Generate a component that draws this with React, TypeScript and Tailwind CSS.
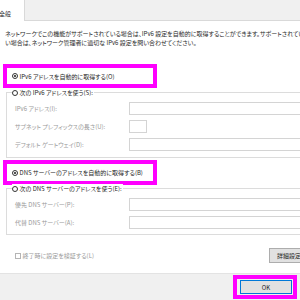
const font = { fontFamily: '"Noto Sans CJK JP", "Noto Sans", sans-serif' };

function Radio({ checked }: { checked?: boolean }) {
  return (
    <span className="w-[6px] h-[6px] rounded-full border border-[#333333] bg-white flex items-center justify-center shrink-0">
      {checked && <span className="w-[2px] h-[2px] rounded-full bg-[#1a1a1a]" />}
    </span>
  );
}

function Field({ label, width }: { label: string; width: string }) {
  return (
    <div className="flex items-center h-[13px]">
      <span className="w-[114px] shrink-0 text-[#9a9a9a] whitespace-nowrap">{label}</span>
      <div className={`${width} h-[13px] shrink-0 border border-[#d4d4d4] bg-white`} />
    </div>
  );
}

export default function App() {
  return (
    <div
      className="w-[300px] h-[300px] overflow-hidden bg-white flex flex-col text-[6px] leading-[9px] text-[#1f1f1f] [font-feature-settings:'palt']"
      style={font}
    >
      {/* タブ */}
      <div className="h-[21px] flex shrink-0 bg-[#f0f0f0]">
        <div className="w-[25px] bg-white border-r border-[#d9d9d9] flex items-center pt-[6px]">
          <span className="-ml-[1px]">全般</span>
        </div>
        <div className="flex-1 border-b border-[#d9d9d9]" />
      </div>

      {/* 説明 */}
      <div className="mt-[8px] pl-[5px] whitespace-nowrap text-[#2a2a2a]">
        <p>ネットワークでこの機能がサポートされている場合は、IPv6 設定を自動的に取得することができます。サポートされていな</p>
        <p>い場合は、ネットワーク管理者に適切な IPv6 設定を問い合わせてください。</p>
      </div>

      {/* IPv6 自動 */}
      <div className="mt-[17px] ml-[3px] w-[154px] h-[24px] shrink-0 border-4 border-[#ff00ff] flex items-center pl-[5px] gap-[1.5px]">
        <Radio checked />
        <span className="whitespace-nowrap">IPv6 アドレスを自動的に取得する(O)</span>
      </div>

      {/* IPv6 手動 */}
      <div className="relative mt-[4px] ml-[6px] w-[320px] h-[66px] shrink-0 border-l border-t border-b border-[#dcdcdc] pt-[9px] pl-[8px] flex flex-col gap-[5px]">
        <div className="absolute -top-[5px] left-[5px] bg-white flex items-center gap-[1.5px] pr-[1px]">
          <Radio />
          <span className="whitespace-nowrap">次の IPv6 アドレスを使う(S):</span>
        </div>
        <Field label="IPv6 アドレス(I):" width="w-[200px]" />
        <Field label="サブネット プレフィックスの長さ(U):" width="w-[18px]" />
        <Field label="デフォルト ゲートウェイ(D):" width="w-[200px]" />
      </div>

      {/* DNS 自動 */}
      <div className="mt-[2px] ml-[3px] w-[154px] h-[25px] shrink-0 border-4 border-[#ff00ff] flex items-center pl-[5px] gap-[1.5px]">
        <Radio checked />
        <span className="whitespace-nowrap">DNS サーバーのアドレスを自動的に取得する(B)</span>
      </div>

      {/* DNS 手動 */}
      <div className="relative mt-[3px] ml-[6px] w-[320px] h-[47px] shrink-0 border-l border-t border-b border-[#dcdcdc] pt-[9px] pl-[8px] flex flex-col gap-[5px]">
        <div className="absolute -top-[5px] left-[5px] bg-white flex items-center gap-[1.5px] pr-[1px]">
          <Radio />
          <span className="whitespace-nowrap">次の DNS サーバーのアドレスを使う(E):</span>
        </div>
        <Field label="優先 DNS サーバー(P):" width="w-[200px]" />
        <Field label="代替 DNS サーバー(A):" width="w-[200px]" />
      </div>

      {/* 検証 + 詳細設定 */}
      <div className="mt-[13px] w-[330px] h-[15px] shrink-0 flex items-center justify-between">
        <div className="ml-[15px] flex items-center gap-[1.5px] text-[#9a9a9a]">
          <span className="w-[6px] h-[6px] border border-[#b5b5b5] bg-white shrink-0" />
          <span className="whitespace-nowrap">終了時に設定を検証する(L)</span>
        </div>
        <div className="w-[61px] h-[15px] shrink-0 bg-[#e1e1e1] border border-[#adadad] flex items-center pl-[7px] whitespace-nowrap">
          詳細設定(V)...
        </div>
      </div>

      {/* 下部バー */}
      <div className="mt-auto h-[27px] shrink-0 bg-[#f0f0f0] border-t border-[#e3e3e3] flex justify-end pt-[1px] pr-[3px]">
        <div className="w-[64px] h-[24px] border-4 border-[#ff00ff] pl-[3px] pr-[1px] pt-[1px]">
          <div className="w-[52px] h-[14px] bg-[#e1e1e1] border border-[#0078d7] flex items-center justify-center">
            OK
          </div>
        </div>
      </div>
    </div>
  );
}
